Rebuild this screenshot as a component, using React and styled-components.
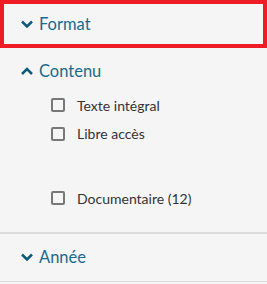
import React from "react";
import styled, { createGlobalStyle } from "styled-components";

const GlobalStyle = createGlobalStyle`
  html, body {
    margin: 0;
    padding: 0;
    background: #f5f5f5;
  }
  body {
    font-family: Lato, "Noto Sans", sans-serif;
  }
`;

const Panel = styled.div`
  width: 267px;
  display: flex;
  flex-direction: column;
`;

const Section = styled.section`
  border-bottom: ${(props) => (props.$last ? "1px solid #dcdcdc" : props.$divider ? "2px solid #dcdcdc" : "none")};
  padding-bottom: ${(props) => props.$pad || 0}px;
`;

const Header = styled.button`
  all: unset;
  box-sizing: border-box;
  display: flex;
  align-items: center;
  gap: 7px;
  width: 100%;
  height: ${(props) => props.$height || 48}px;
  padding-top: ${(props) => props.$top || 0}px;
  padding-left: ${(props) => (props.$focused ? 17 : 21)}px;
  border: ${(props) => (props.$focused ? "4px solid #ee1c25" : "none")};
  color: #196a8d;
  font-family: Lato, "Noto Sans", sans-serif;
  font-size: 16.5px;
  cursor: pointer;
`;

const Chevron = styled.svg`
  width: 12px;
  height: 8px;
  flex: none;
  margin-right: -1px;
`;

const List = styled.ul`
  list-style: none;
  margin: 0;
  padding: 0 0 0 51px;
  display: flex;
  flex-direction: column;
`;

const Item = styled.li`
  display: flex;
  align-items: center;
  gap: 12px;
  height: 28.5px;
  margin-top: ${(props) => props.$gap || 0}px;
  color: #333;
  font-size: 14px;
`;

const Box = styled.span`
  box-sizing: border-box;
  width: 14px;
  height: 14px;
  border: 2px solid #777;
  border-radius: 2px;
  flex: none;
`;

function Arrow({ up }) {
  return (
    <Chevron viewBox="0 0 12 8">
      <polyline
        points={up ? "1,7 6,2 11,7" : "1,1.5 6,6.5 11,1.5"}
        fill="none"
        stroke="#0f5a78"
        strokeWidth="2.5"
      />
    </Chevron>
  );
}

const items = [
  { label: "Texte intégral" },
  { label: "Libre accès" },
  { label: "Documentaire (12)", gap: 36 },
];

export default function App() {
  return (
    <>
      <GlobalStyle />
      <Panel>
        <Section>
          <Header $focused>
            <Arrow />
            Format
          </Header>
        </Section>
        <Section $divider $pad={19}>
          <Header $height={43} $top={3}>
            <Arrow up />
            Contenu
          </Header>
          <List>
            {items.map((item) => (
              <Item key={item.label} $gap={item.gap}>
                <Box />
                {item.label}
              </Item>
            ))}
          </List>
        </Section>
        <Section $last>
          <Header $height={47.5}>
            <Arrow />
            Année
          </Header>
        </Section>
      </Panel>
    </>
  );
}
